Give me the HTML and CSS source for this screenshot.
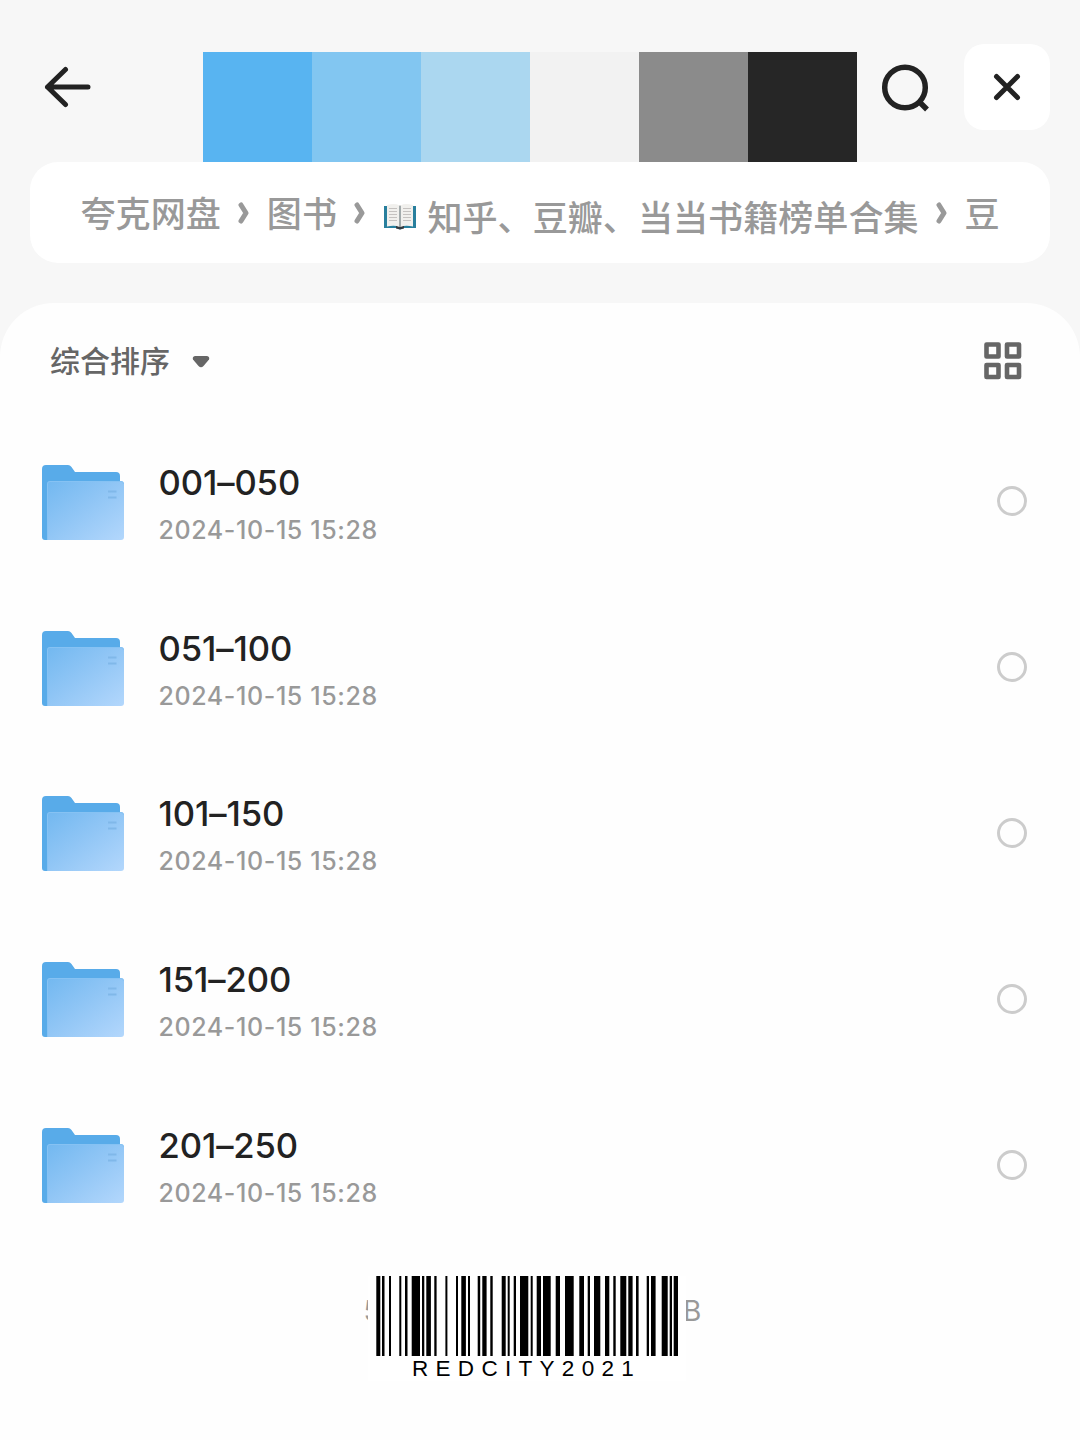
FILE: index.html
```html
<!DOCTYPE html>
<html lang="zh-CN">
<head>
<meta charset="utf-8">
<title>夸克网盘</title>
<link rel="stylesheet" href="styles.css">
</head>
<body>
<svg width="0" height="0" class="defs" aria-hidden="true">
  <defs>
    <linearGradient id="front" x1="0" y1="0" x2="1" y2="1">
      <stop offset="0" stop-color="#72b8f0"/><stop offset=".45" stop-color="#8fc5f5"/><stop offset="1" stop-color="#b3d7fc"/>
    </linearGradient>
    <symbol id="folder" viewBox="0 0 82 76">
      <path fill="#58abe9" d="M0 4q0-4 4-4h22q2 0 3.500 2l3.500 5h41q4 0 4 4v64H3q-3 0-3-3z"/>
      <path fill="url(#front)" d="M5 19q0-3 3-3h71q3 0 3 3v53q0 3-3 3H5z"/>
      <path fill="none" stroke="#86c2f3" stroke-width="1" d="M5.500 75V19q0-2.500 2.500-2.500h71q2.500 0 2.500 2.500"/>
      <path stroke="#80b8e9" stroke-width="2" d="M66 26.500h8.500M66 32.500h8.500"/>
    </symbol>
  </defs>
</svg>
<header class="top">
  <svg class="back" width="48" height="42" viewBox="0 0 48 42"><path d="M22.500 3.500 4.500 21l18 17.500M4.500 21h40.500"/></svg>
  <div class="swatches"><i class="c1"></i><i class="c2"></i><i class="c3"></i><i class="c4"></i><i class="c5"></i><i class="c6"></i></div>
  <svg class="search" width="50" height="50" viewBox="0 0 50 50"><circle cx="24" cy="24.500" r="20.300"/><path d="m38 38.500 8 8"/></svg>
  <div class="close"><svg width="30" height="30" viewBox="0 0 30 30"><path d="m4.500 4.500 21 21M25.500 4.500l-21 21"/></svg></div>
</header>
<nav class="crumbs">
  <span>夸克网盘</span>
  <svg class="chev" width="12" height="22" viewBox="0 0 12 22"><path d="m3 3 5 8-5 8"/></svg>
  <span>图书</span>
  <svg class="chev" width="12" height="22" viewBox="0 0 12 22"><path d="m3 3 5 8-5 8"/></svg>
  <span class="low book">
    <svg width="34" height="27" viewBox="0 0 34 27">
      <path fill="#287f9d" d="M1 3h32v22H20l-3 1.500-3-1.500H1z"/>
      <path fill="#333b40" d="M13 23h8v2.500l-4 1-4-1z"/>
      <path fill="#f1f0ed" d="M4 2q8-2 12.500.500V24Q12 22 4 23.500zM30 2q-8-2-12.500.500V24q4.500-2 12.500-.500z"/>
      <path stroke="#aaa6a2" stroke-width="1.500" d="M17 2.500V24"/>
      <path stroke="#c5c2c0" d="M6 5.500h8M6 8.500h8M6 11.500h8M6 14.500h8M6 17.500h8M20 5.500h8M20 8.500h8M20 11.500h8M20 14.500h8M20 17.500h8"/>
    </svg>
  </span>
  <span class="low">知乎、豆瓣、当当书籍榜单合集</span>
  <svg class="chev" width="12" height="22" viewBox="0 0 12 22"><path d="m3 3 5 8-5 8"/></svg>
  <span>豆</span>
</nav>
<main class="sheet">
  <div class="toolbar">
    <span>综合排序</span>
    <svg width="18" height="14" viewBox="0 0 18 14"><path fill="#666" d="M3 1h12q3 .500 2 3.500l-5.500 6.500q-2.500 2.500-5 0L1 4.500Q0 1.500 3 1z"/></svg>
    <svg class="grid" width="38" height="38" viewBox="0 0 38 38"><path d="M2.500 2.500h12v12h-12zM23 2.500h12v12H23zM2.500 23h12v12h-12zM23 23h12v12H23z"/></svg>
  </div>
  <ul class="list">
    <li><svg class="folder"><use href="#folder"/></svg><div><b>001–050</b><time>2024-10-15 15:28</time></div><i class="radio"></i></li>
    <li><svg class="folder"><use href="#folder"/></svg><div><b>051–100</b><time>2024-10-15 15:28</time></div><i class="radio"></i></li>
    <li><svg class="folder"><use href="#folder"/></svg><div><b>101–150</b><time>2024-10-15 15:28</time></div><i class="radio"></i></li>
    <li><svg class="folder"><use href="#folder"/></svg><div><b>151–200</b><time>2024-10-15 15:28</time></div><i class="radio"></i></li>
    <li><svg class="folder"><use href="#folder"/></svg><div><b>201–250</b><time>2024-10-15 15:28</time></div><i class="radio"></i></li>
  </ul>
  <footer>
    <span class="size left">5</span>
    <div class="barcode">
      <svg width="318" height="80" viewBox="0 0 318 80"><path d="M8.300 0h4v80h-4zM14 0h2.500v80H14zM21 0h2v80h-2zM31.300 0h2v80h-2zM37 0h2.500v80H37zM43.700 0h8.300v80h-8.300zM54 0h2.300v80H54zM58.300 0h4.600v80h-4.600zM66.300 0h2.300v80h-2.300zM77.400 0h2v80h-2zM88 0h2v80h-2zM93.300 0h4.600v80h-4.600zM100 0h2v80h-2zM109.700 0h2.500v80h-2.500zM114.300 0h4.300v80h-4.300zM122.300 0h2.400v80h-2.400zM133.700 0h4v80h-4zM139.700 0h2v80h-2zM145.700 0h2.300v80h-2.300zM152 0h8.300v80H152zM162.700 0h2v80h-2zM168.700 0h4.300v80h-4.300zM175 0h7.700v80H175zM187.700 0h4.300v80h-4.300zM197 0h8.700v80H197zM211.300 0h4.700v80h-4.700zM219.700 0h2.300v80h-2.300zM226 0h6.300v80H226zM237 0h4.300v80H237zM245.300 0h2.400v80h-2.400zM252.300 0h6v80h-6zM260.300 0h4.300v80h-4.300zM268 0h2.600v80H268zM278.700 0h2.300v80h-2.300zM283 0h4.600v80H283zM293.700 0h6v80h-6zM301.700 0h2.300v80h-2.300zM305.700 0h4.300v80h-4.300z"/></svg>
      <p>REDCITY2021</p>
    </div>
    <span class="size right">B</span>
  </footer>
</main>
</body>
</html>
```
FILE: styles.css
```css
* { box-sizing: border-box; }
body { margin: 0; width: 1080px; height: 1440px; overflow: hidden; background: #f7f7f7; font-family: Inter, "Noto Sans CJK SC", sans-serif; display: flex; flex-direction: column; }
.defs { display: block; position: absolute; }
svg { flex: none; display: block; }
.top { height: 162px; flex: none; display: flex; align-items: flex-start; }
.back, .search, .close path, .chev { fill: none; stroke: #222; stroke-width: 5; stroke-linecap: round; stroke-linejoin: round; }
.back { margin: 66px 0 0 43px; }
.swatches { display: flex; width: 654px; height: 110px; margin: 52px 0 0 112px; }
.swatches i { flex: 1; }
.c1 { background: #58b4f1; }
.c2 { background: #82c6f1; }
.c3 { background: #abd7f0; }
.c4 { background: #f2f2f2; }
.c5 { background: #8b8b8b; }
.c6 { background: #262626; }
.search { margin: 63px 0 0 23.500px; stroke-width: 5.500; stroke-linecap: butt; }
.close { width: 86px; height: 86px; margin: 44px 0 0 33.500px; border-radius: 20px; background: #fff; display: flex; align-items: center; justify-content: center; }
.crumbs { flex: none; width: 1020px; height: 101px; margin-left: 30px; padding: 0 0 0 50.500px; border-radius: 28px; background: #fff; display: flex; align-items: center; color: #999; font: 500 35.100px/50px "Noto Sans CJK SC", sans-serif; white-space: nowrap; }
.crumbs span { margin-bottom: 1px; }
.crumbs .low { margin-bottom: 0; padding-top: 7px; }
.crumbs .book { margin: 0 10.500px 0 0; padding-top: 7px; }
.chev { margin: 0 17px; stroke: #999; }
.sheet { flex: 1; margin-top: 40px; border-radius: 54px 54px 0 0; background: #fefefe; }
.toolbar { height: 115px; padding: 0 58.500px 0 50px; display: flex; align-items: center; color: #666; font: 500 30px/40px "Noto Sans CJK SC", sans-serif; }
.toolbar span { margin-bottom: 4px; }
.toolbar svg { margin: 2px 0 0 22px; }
.toolbar .grid { margin: 1px 0 0 auto; fill: none; stroke: #666; stroke-width: 4.600; stroke-linejoin: round; }
.list { margin: 0; padding: .5px 0 0; list-style: none; }
.list li { height: 165.800px; padding: 0 53px 0 42px; display: flex; align-items: center; }
.folder { width: 82px; height: 76px; margin-top: 3px; }
.list div { flex: 1; margin: 4px 0 0 34.500px; }
.list b { display: block; font-size: 34.600px; line-height: 44px; font-weight: 450; color: #222; letter-spacing: -.1px; }
.list time { display: block; margin-top: 9px; font-size: 25px; line-height: 34px; font-weight: 450; color: #999; letter-spacing: .6px; }
.radio { width: 30px; height: 30px; border: 3px solid #ccc; border-radius: 50%; }
footer { display: flex; justify-content: center; padding-top: 28.500px; margin-right: 12px; }
.barcode { width: 318px; background: #fff; }
.barcode p { margin: 0; font: 22.500px/25px "Liberation Sans", Arial, sans-serif; letter-spacing: 7.300px; padding-left: 44px; color: #000; }
.size { width: 18px; height: 40px; margin-top: 15px; overflow: hidden; font-size: 28px; line-height: 40px; color: #999; }
.left { width: 4px; text-indent: -.5px; }
.right { text-indent: -3px; }
```
